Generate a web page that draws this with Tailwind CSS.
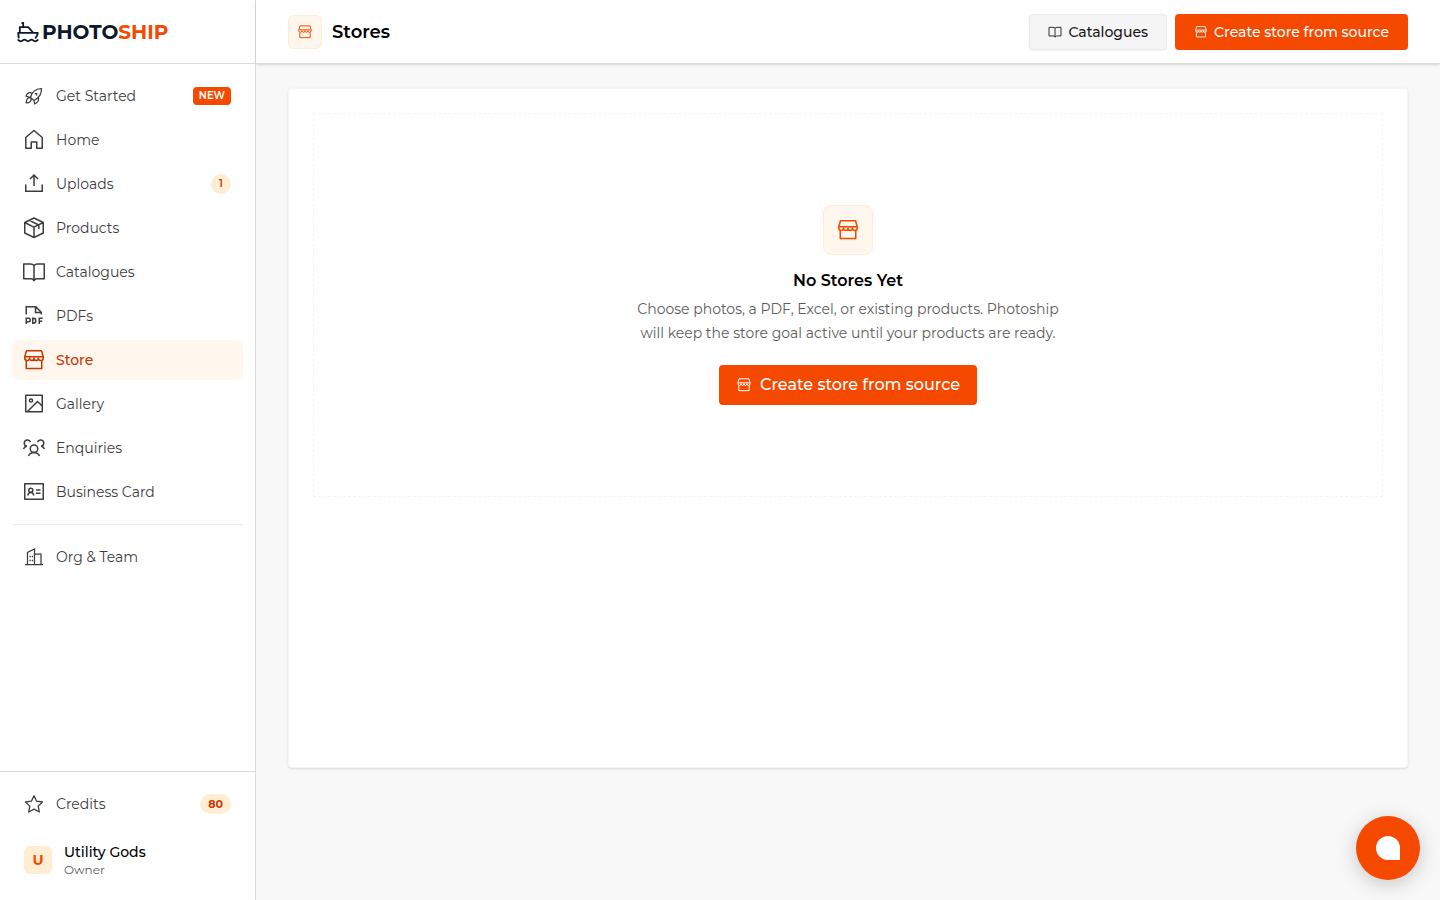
<!doctype html>
<html lang="en">
<head>
    <meta charset="UTF-8">
    <meta name="viewport" content="width=device-width, initial-scale=1.0">
    <title>Stores - Photoship</title>
    <script src="https://cdn.jsdelivr.net/npm/@tailwindcss/browser@4"></script>
</head>
<body class="font-[Montserrat,Inter,sans-serif] bg-[#f8f8f8] text-black">
    <!-- shared icons -->
    <svg class="hidden">
        <symbol id="icon-store" viewBox="0 0 24 24" fill="none" stroke="currentColor" stroke-width="1.5" stroke-linejoin="round">
            <path d="M4.500 2.750h15l1.750 6v1.250a2.450 2.500 0 0 1-4.900 0 2.175 2.500 0 0 1-4.350 0 2.175 2.500 0 0 1-4.350 0 2.450 2.500 0 0 1-4.900 0v-1.250z"/>
            <path d="M3 8.750h18M4.250 12.500v8h15.500v-8"/>
        </symbol>
        <symbol id="icon-book" viewBox="0 0 24 24" fill="none" stroke="currentColor" stroke-width="1.5" stroke-linejoin="round">
            <path d="M12 5.500c-.8-1-1.900-1.500-3.500-1.500H1.750v14.750h7.500c1.200 0 2.200.8 2.750 2 .55-1.200 1.550-2 2.750-2h7.500V4H15.500c-1.600 0-2.700.5-3.500 1.500zM12 5.500V21"/>
        </symbol>
    </svg>
    <div class="flex min-h-screen">
        <!-- sidebar -->
        <aside class="w-64 shrink-0 flex flex-col bg-white border-r border-[#dcdcdc]">
            <a href="#" class="h-16 shrink-0 flex items-center gap-0.5 px-4 border-b border-[#dcdcdc] text-[#0f172a]">
                <svg class="size-6" viewBox="0 0 24 24" fill="none" stroke="currentColor" stroke-width="1.8" stroke-linejoin="round">
                    <path d="M5.500 3h1.700v4M3.800 12.800V7.200h8.400l4.800 5.300M2.800 18.300l-.6-5.400h19.600c-.2 2-1.200 4-2.600 5.600"/>
                    <path d="M1.500 19.800c1.300 0 1.800 1.500 3.500 1.500s1.900-1.700 3.500-1.700 1.900 1.700 3.500 1.700 1.900-1.700 3.500-1.700 1.900 1.700 3.500 1.700 2.200-1.500 3.500-1.500"/>
                </svg>
                <span class="text-xl leading-6 font-bold">PHOTO<span class="text-[#f54900]">SHIP</span></span>
            </a>
            <nav class="flex-1 flex flex-col gap-1 p-3 text-sm text-[#3d3d3d]">
                <a href="#" class="h-10 flex items-center gap-2.5 px-2.5 rounded-lg">
                    <svg class="size-6" viewBox="0 0 24 24" fill="none" stroke="currentColor" stroke-width="1.25" stroke-linecap="round" stroke-linejoin="round">
                        <path d="M8.500 13.500c1-4.500 4.500-8.500 11-9 .2 5.500-2.500 9.500-7.500 12zM10.300 9.200c-2.800-1.500-5-.5-6.300 3l4.500 1.300M16.300 13.200c1 3-.3 5.200-3.600 6.800l-.7-3.500M8.300 13.800c-2.300-.5-3.800 1.200-4.100 5 3.500-.1 5.300-1.500 4.900-3.900"/>
                        <path d="M13.200 9.500h1.500v1.500"/>
                    </svg>
                    <span class="flex-1">Get Started</span>
                    <span class="mr-0.5 px-1.5 rounded-sm bg-[#f54900] text-white text-[10px] leading-[18px] font-semibold">NEW</span>
                </a>
                <a href="#" class="h-10 flex items-center gap-2.5 px-2.5 rounded-lg">
                    <svg class="size-6" viewBox="0 0 24 24" fill="none" stroke="currentColor" stroke-width="1.5" stroke-linejoin="round">
                        <path d="M3.750 9.500 12 2.500l8.250 7v10.750H14.750V14h-5.500v6.250h-5.500z"/>
                    </svg>
                    <span>Home</span>
                </a>
                <a href="#" class="h-10 flex items-center gap-2.5 px-2.5 rounded-lg">
                    <svg class="size-6" viewBox="0 0 24 24" fill="none" stroke="currentColor" stroke-width="1.5">
                        <path d="M3.750 12.500v6.750h16.500V12.500M12 14V2.800M8 7l4-4 4 4"/>
                    </svg>
                    <span class="flex-1">Uploads</span>
                    <span class="mr-0.5 size-5 rounded-full bg-[#ffedd4] text-[#ca3500] text-[10px] leading-5 font-semibold text-center">1</span>
                </a>
                <a href="#" class="h-10 flex items-center gap-2.5 px-2.5 rounded-lg">
                    <svg class="size-6" viewBox="0 0 24 24" fill="none" stroke="currentColor" stroke-width="1.5" stroke-linejoin="round">
                        <path d="m12 2 9.250 4.500v10.500L12 21.500 2.750 17V6.500zM2.750 6.500 12 11.200l9.250-4.700M12 11.200v10.300M7.300 4.300l9.500 4.700v4"/>
                    </svg>
                    <span>Products</span>
                </a>
                <a href="#" class="h-10 flex items-center gap-2.5 px-2.5 rounded-lg">
                    <svg class="size-6"><use href="#icon-book"/></svg>
                    <span>Catalogues</span>
                </a>
                <a href="#" class="h-10 flex items-center gap-2.5 px-2.5 rounded-lg">
                    <svg class="size-6" viewBox="0 0 24 24" fill="none" stroke="currentColor" stroke-width="1.500">
                        <path d="M4.250 10.500V2.750h9.500l5.500 5.500v2.250M13.500 2.750v5.750h5.750"/>
                        <path d="M4.250 20v-5.750h2.250a1.750 1.750 0 0 1 0 3.500H4.250M10.750 14.250v5h.75c1.500 0 2.250-.9 2.250-2.500s-.75-2.500-2.250-2.500zM17.250 20v-5.750h3.500M17.250 17.250h3"/>
                    </svg>
                    <span>PDFs</span>
                </a>
                <a href="#" class="h-10 flex items-center gap-2.5 px-2.5 rounded-lg bg-[#fff7ed] text-[#ca3500] font-medium">
                    <svg class="size-6"><use href="#icon-store"/></svg>
                    <span>Store</span>
                </a>
                <a href="#" class="h-10 flex items-center gap-2.5 px-2.5 rounded-lg">
                    <svg class="size-6" viewBox="0 0 24 24" fill="none" stroke="currentColor" stroke-width="1.5" stroke-linejoin="round">
                        <path d="M3.750 3.250h16.500v16.500H3.750zM5.500 19.500 15.500 9.500l4.750 4.500"/>
                        <circle cx="9" cy="8.500" r="1.600"/>
                    </svg>
                    <span>Gallery</span>
                </a>
                <a href="#" class="h-10 flex items-center gap-2.5 px-2.5 rounded-lg">
                    <svg class="size-6" viewBox="0 0 24 24" fill="none" stroke="currentColor" stroke-width="1.5">
                        <circle cx="12" cy="12.750" r="3.750"/>
                        <path d="M6.500 20c1-2.300 3-3.500 5.500-3.500s4.500 1.200 5.500 3.500M1.500 13c.6-1.700 1.700-2.500 3.400-2.700a3.200 3.200 0 1 1 3.600-4.100M22.500 13c-.6-1.700-1.700-2.500-3.400-2.700a3.200 3.200 0 1 0-3.600-4.100"/>
                    </svg>
                    <span>Enquiries</span>
                </a>
                <a href="#" class="h-10 flex items-center gap-2.5 px-2.5 rounded-lg">
                    <svg class="size-6" viewBox="0 0 24 24" fill="none" stroke="currentColor" stroke-width="1.5" stroke-linejoin="round">
                        <path d="M2.750 3.750h18.500v15.500H2.750z"/>
                        <circle cx="8.800" cy="10.300" r="2"/>
                        <path d="M5.750 15.500c.4-1.900 1.500-2.900 3.050-2.900s2.650 1 3.050 2.900M14 10h4.500M14 13.250h4.500"/>
                    </svg>
                    <span>Business Card</span>
                </a>
                <hr class="my-2 border-[#ebebeb]">
                <a href="#" class="h-10 flex items-center gap-2.5 px-2.5 rounded-lg">
                    <svg class="size-6" viewBox="0 0 24 24" fill="none" stroke="currentColor" stroke-width="1.25">
                        <path d="M3 19.500h18M5.500 19.500V7.500l7-3.500v15.500M12.500 9h6.500v10.500"/>
                        <path d="M7.500 11.500h1.300M9.800 11.500h1.300M7.500 15.500h1.300M9.800 15.500h1.300" stroke-width="1.500"/>
                    </svg>
                    <span>Org &amp; Team</span>
                </a>
            </nav>
            <div class="flex flex-col gap-2 p-3 border-t border-[#dcdcdc]">
                <a href="#" class="h-10 flex items-center gap-2.5 px-2.5 text-sm text-[#3d3d3d]">
                    <svg class="size-6" viewBox="0 0 24 24" fill="none" stroke="currentColor" stroke-width="1.3" stroke-linejoin="round">
                        <path d="m12 3.800 2.600 5.400 5.900.8-4.300 4.100 1.100 5.900-5.300-2.900-5.300 2.900 1.100-5.900L3.500 10l5.900-.8z"/>
                    </svg>
                    <span class="flex-1">Credits</span>
                    <span class="mr-0.5 px-2 rounded-full bg-[#ffedd4] text-[#ca3500] text-[11px] leading-5 font-bold">80</span>
                </a>
                <button type="button" class="h-14 flex items-center gap-3 px-3 text-left">
                    <span class="size-7 rounded-md bg-[#ffedd4] text-[#f54900] text-sm leading-7 font-bold text-center">U</span>
                    <span>
                        <span class="block text-sm leading-5 font-medium">Utility Gods</span>
                        <span class="block text-xs leading-4 text-[#5c5c5c]">Owner</span>
                    </span>
                </button>
            </div>
        </aside>
        <div class="flex-1 flex flex-col">
            <header class="h-16 flex items-center gap-2 px-8 bg-white border-b border-[#dcdcdc] shadow-sm">
                <div class="flex-1 flex items-center gap-2.5">
                    <div class="size-[34px] flex items-center justify-center rounded-md border border-[#ffedd4] bg-[#fff7ed] text-[#f54900]">
                        <svg class="size-4"><use href="#icon-store"/></svg>
                    </div>
                    <h1 class="text-lg font-semibold">Stores</h1>
                </div>
                <button type="button" class="h-9 flex items-center gap-1.5 px-[18px] rounded-sm border border-[#ebebeb] bg-[#f5f5f5] shadow-xs text-sm font-medium text-[#171717]">
                    <svg class="size-3.5"><use href="#icon-book"/></svg>
                    Catalogues
                </button>
                <button type="button" class="h-9 flex items-center gap-1.5 px-[19px] rounded-sm bg-[#f54900] text-sm font-medium text-white">
                    <svg class="size-3.5"><use href="#icon-store"/></svg>
                    Create store from source
                </button>
            </header>
            <main class="flex-1 px-8 py-6">
                <section class="min-h-[680px] p-6 rounded-sm border border-[#f5f5f5] bg-white shadow-sm">
                    <div class="min-h-96 flex flex-col items-center justify-center border border-dashed border-[#f5f5f5] text-center">
                        <div class="size-[50px] flex items-center justify-center rounded-lg border border-[#ffedd4] bg-[#fff7ed] text-[#f54900]">
                            <svg class="size-6"><use href="#icon-store"/></svg>
                        </div>
                        <h2 class="mt-3.5 text-base leading-6 font-semibold">No Stores Yet</h2>
                        <p class="mt-1 max-w-md text-sm leading-6 text-[#5c5c5c]">Choose photos, a PDF, Excel, or existing products. Photoship will keep the store goal active until your products are ready.</p>
                        <button type="button" class="mt-5 h-10 flex items-center gap-2 px-[17px] rounded-sm bg-[#f54900] text-base font-medium text-white">
                            <svg class="size-4"><use href="#icon-store"/></svg>
                            Create store from source
                        </button>
                    </div>
                </section>
            </main>
        </div>
    </div>
    <button type="button" aria-label="Open chat" class="fixed bottom-5 right-5 size-16 flex items-center justify-center rounded-full bg-[#f54900] shadow-[0_4px_20px_rgba(0,0,0,0.2)]">
        <span class="size-6 rounded-full rounded-br-none bg-white"></span>
    </button>
</body>
</html>
